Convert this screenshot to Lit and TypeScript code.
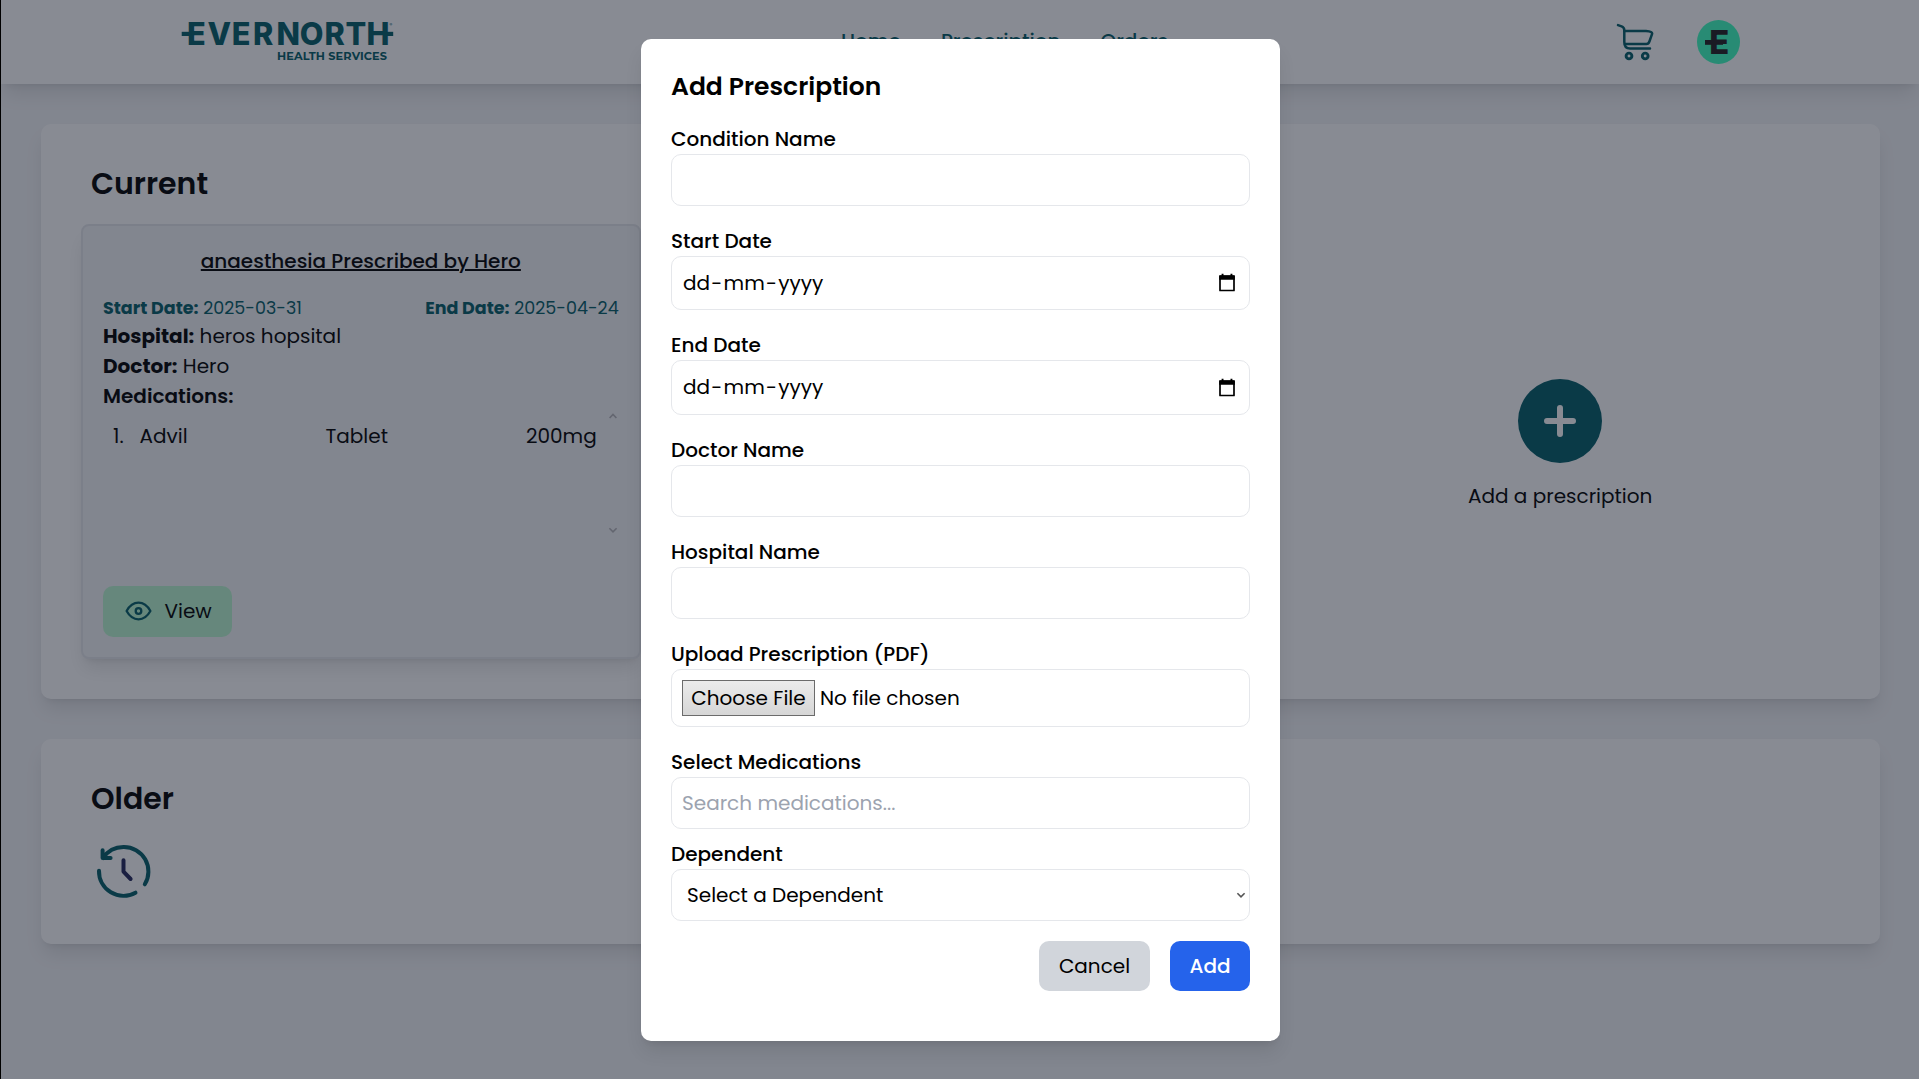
import { LitElement, html, css, svg, nothing } from "lit";
import { customElement } from "lit/decorators.js";

const calendarIcon = svg`
  <svg class="calendar" viewBox="0 0 18 19" width="18" height="19">
    <path d="M2 3.2h14v14.3H2z" fill="none" stroke="#000" stroke-width="1.7" stroke-linejoin="round" />
    <path d="M1.2 2.6h15.6v4.2H1.2zM3.6.8h1.9v3H3.6zM12.5.8h1.9v3h-1.9z" fill="#000" />
  </svg>`;

const chevron = (className: string, up = false) => html`
  <svg class=${className} viewBox="0 0 10 8" width="10" height="8">
    <path d=${up ? "M1.6 6 5 2.4 8.4 6" : "M1.4 2.2 5 5.8 8.6 2.2"} fill="none" stroke="currentColor" stroke-width="1.6" />
  </svg>`;

interface Field {
  label: string;
  kind: "text" | "date" | "file" | "search" | "select";
}

const FIELDS: Field[] = [
  { label: "Condition Name", kind: "text" },
  { label: "Start Date", kind: "date" },
  { label: "End Date", kind: "date" },
  { label: "Doctor Name", kind: "text" },
  { label: "Hospital Name", kind: "text" },
  { label: "Upload Prescription (PDF)", kind: "file" },
  { label: "Select Medications", kind: "search" },
  { label: "Dependent", kind: "select" },
];

@customElement("prescription-dialog")
class PrescriptionDialog extends LitElement {
  static styles = css`
    :host {
      display: block;
      box-sizing: border-box;
      width: 639px;
      padding: 30px 30px 50px;
      border-radius: 10px;
      background: #fff;
      color: #000;
      box-shadow: 0 12.5px 18.75px -3.75px rgb(0 0 0 / 0.1), 0 5px 7.5px -5px rgb(0 0 0 / 0.1);
    }
    * {
      box-sizing: border-box;
    }
    h2 {
      margin: 0 0 20px;
      font-size: 25px;
      line-height: 35px;
      font-weight: 600;
    }
    .field {
      margin-bottom: 20px;
    }
    .field.search {
      margin-bottom: 10px;
    }
    .label {
      display: block;
      height: 30px;
      font-weight: 500;
    }
    .control {
      display: flex;
      align-items: center;
      height: 52px;
      padding: 0 10px;
      border: 1px solid #e5e7eb;
      border-radius: 10px;
      white-space: nowrap;
    }
    .date .control {
      height: 54.5px;
      padding: 0 13px 1px 11px;
      justify-content: space-between;
    }
    .mask {
      display: flex;
      gap: 1.25px;
    }
    .file .control {
      height: 58.25px;
      gap: 5px;
    }
    .choose {
      height: 36px;
      width: 133px;
      padding: 2px 0;
      text-align: center;
      border: 1px solid #6b6b6b;
      background: linear-gradient(#ebebeb, #d6d6d6);
    }
    .placeholder {
      color: #9ca3af;
    }
    .select .control {
      padding: 0 3px 0 15px;
      justify-content: space-between;
    }
    .arrow {
      color: #555;
    }
    .actions {
      display: flex;
      justify-content: flex-end;
      gap: 20px;
    }
    .button {
      width: 111px;
      height: 50px;
      padding: 10px 0;
      border-radius: 10px;
      text-align: center;
      background: #d1d5db;
    }
    .button.primary {
      width: 80px;
      background: #2563eb;
      color: #fff;
      font-weight: 500;
    }
  `;

  private control(kind: Field["kind"]) {
    switch (kind) {
      case "date":
        return html`<div class="mask"><span>dd</span><span>-</span><span>mm</span><span>-</span><span>yyyy</span></div>
          ${calendarIcon}`;
      case "file":
        return html`<div class="choose">Choose File</div>
          <span>No file chosen</span>`;
      case "search":
        return html`<span class="placeholder">Search medications...</span>`;
      case "select":
        return html`<span>Select a Dependent</span>${chevron("arrow")}`;
      default:
        return nothing;
    }
  }

  render() {
    return html`
      <h2>Add Prescription</h2>
      ${FIELDS.map(
        (f) => html`
          <div class="field ${f.kind}">
            <span class="label">${f.label}</span>
            <div class="control">${this.control(f.kind)}</div>
          </div>
        `
      )}
      <div class="actions">
        <div class="button">Cancel</div>
        <div class="button primary">Add</div>
      </div>
    `;
  }
}

@customElement("app-root")
class AppRoot extends LitElement {
  static styles = css`
    :host {
      display: block;
      position: relative;
      box-sizing: border-box;
      width: 1919px;
      height: 1079px;
      overflow: hidden;
      border-left: 1px solid #000;
      background: #f3f4f6;
      color: #000;
      font: 400 20px/30px Poppins, Inter, "Noto Sans", sans-serif;
    }
    * {
      box-sizing: border-box;
    }
    svg {
      display: block;
    }
    header {
      display: flex;
      align-items: center;
      justify-content: space-between;
      height: 84px;
      padding: 0 179px 0 180px;
      background: #fff;
      color: #035c67;
      box-shadow: 0 12.5px 18.75px -3.75px rgb(0 0 0 / 0.1), 0 5px 7.5px -5px rgb(0 0 0 / 0.1);
    }
    .logo {
      overflow: visible;
    }
    .mark {
      font: 800 30.7px Inter, sans-serif;
    }
    .tagline {
      font: 700 11.3px Montserrat, Inter, sans-serif;
    }
    .registered {
      font: 400 4px Inter, sans-serif;
    }
    .initial {
      font: 800 33px Inter, sans-serif;
    }
    nav {
      display: flex;
      gap: 40px;
      margin-right: 1px;
      padding-bottom: 2px;
      font-weight: 500;
    }
    .tools {
      display: flex;
      align-items: center;
      gap: 43px;
    }
    main {
      display: flex;
      flex-direction: column;
      gap: 40px;
      padding: 40px 39px 0 40px;
    }
    .panel {
      padding: 40px;
      border-radius: 10px;
      background: #fff;
      box-shadow: 0 12.5px 18.75px -3.75px rgb(0 0 0 / 0.1), 0 5px 7.5px -5px rgb(0 0 0 / 0.1);
    }
    .panel.current {
      height: 575px;
    }
    .panel.older {
      height: 205px;
    }
    h1 {
      margin: 0 0 20px;
      padding-left: 10px;
      font-size: 30px;
      line-height: 40px;
      font-weight: 600;
    }
    .history {
      margin-left: 10px;
    }
    .columns {
      display: grid;
      grid-template-columns: repeat(3, 1fr);
      gap: 40px;
      height: 434.5px;
    }
    .record {
      display: flex;
      flex-direction: column;
      padding: 20px 20px 19.5px;
      border: 2px solid #e5e7eb;
      border-radius: 8px;
      background: #f3f4f6;
      box-shadow: 0 12.5px 18.75px -3.75px rgb(0 0 0 / 0.1), 0 5px 7.5px -5px rgb(0 0 0 / 0.1);
    }
    .title {
      height: 30px;
      margin-bottom: 20px;
      text-align: center;
      font-weight: 500;
      text-decoration: underline;
    }
    .dates {
      display: flex;
      justify-content: space-between;
      font-size: 17.5px;
      line-height: 25px;
      color: #035c67;
    }
    .strong {
      font-weight: 700;
    }
    .strong.heading {
      font-weight: 600;
    }
    .medications {
      display: flex;
      height: 125px;
      padding: 0 1px 0 10px;
    }
    .rows {
      flex: 1;
      padding-top: 10px;
    }
    .row {
      display: grid;
      grid-template-columns: 26.5px 186px 1fr auto;
    }
    .scroll {
      display: flex;
      flex-direction: column;
      justify-content: space-between;
      padding: 1px 0 2px 11px;
      color: #b4b4b8;
    }
    .view {
      display: flex;
      align-items: center;
      gap: 12.5px;
      width: 129px;
      height: 51px;
      margin-top: auto;
      padding: 0 0 1px 22px;
      border-radius: 10px;
      background: #bbf7d0;
    }
    .add {
      grid-column: 3;
      display: flex;
      flex-direction: column;
      align-items: center;
      gap: 18px;
      padding-top: 155px;
    }
    .backdrop {
      position: absolute;
      inset: 0;
      display: flex;
      align-items: center;
      justify-content: center;
      padding: 1px 0 0 1px;
      background: rgb(17 24 39 / 0.5);
    }
  `;

  private logo() {
    return html`
      <svg class="logo" viewBox="181 18 213 48" width="213" height="48" fill="#035c67">
        <text class="mark" y="45" x="187 207.6 231.7 252.9 276.4 299.7 324.5 345.6 366.6">EVERNORTH</text>
        <rect x="181.7" y="31.8" width="8" height="4.2" />
        <rect x="386" y="31.8" width="7.2" height="4.2" />
        <text class="registered" x="389.5" y="26">®</text>
        <text class="tagline" x="277" y="60" textLength="110">HEALTH SERVICES</text>
      </svg>
    `;
  }

  render() {
    return html`
      <header>
        ${this.logo()}
        <nav><span>Home</span><span>Prescription</span><span>Orders</span></nav>
        <div class="tools">
          <svg viewBox="0 0 38 38" width="38" height="38" fill="none" stroke="#035c67" stroke-width="2.5" stroke-linecap="round" stroke-linejoin="round">
            <path d="M2 2.1 5.6 3.4Q8.3 4.4 8.3 7.2V19Q8.3 25.6 14 25.6H34" />
            <path d="M8.3 8H30Q37 8.4 36 11.2L33.6 18Q32.6 21 30.4 21H9" />
            <circle cx="13" cy="33" r="2.9" stroke-width="2.9" />
            <circle cx="29.2" cy="33" r="2.9" stroke-width="2.9" />
          </svg>
          <svg viewBox="0 0 43 44" width="43" height="44">
            <ellipse cx="21.5" cy="22" rx="21.5" ry="22" fill="#3effc0" />
            <g fill="#231f20">
              <text class="initial" x="12.3" y="34" textLength="20" lengthAdjust="spacingAndGlyphs">E</text>
              <rect x="8" y="20" width="18" height="4.8" />
            </g>
          </svg>
        </div>
      </header>
      <main>
        <section class="panel current">
          <h1>Current</h1>
          <div class="columns">
            <article class="record">
              <div class="title">anaesthesia Prescribed by Hero</div>
              <div class="dates">
                <div><span class="strong">Start Date:</span> 2025-03-31</div>
                <div><span class="strong">End Date:</span> 2025-04-24</div>
              </div>
              <div><span class="strong">Hospital:</span> heros hopsital</div>
              <div><span class="strong">Doctor:</span> Hero</div>
              <div class="strong heading">Medications:</div>
              <div class="medications">
                <div class="rows">
                  <div class="row"><span>1.</span><span>Advil</span><span>Tablet</span><span>200mg</span></div>
                </div>
                <div class="scroll">${chevron("up", true)}${chevron("down")}</div>
              </div>
              <div class="view">
                <svg viewBox="0 0 27 20" width="27" height="20" fill="none" stroke="#035c67" stroke-width="2.3">
                  <path d="M1.6 10C4.6 4.6 8.6 1.7 13.5 1.7S22.4 4.6 25.4 10C22.4 15.4 18.4 18.3 13.5 18.3S4.6 15.4 1.6 10Z" stroke-linejoin="round" />
                  <circle cx="13.5" cy="10" r="2.8" />
                </svg>
                <span>View</span>
              </div>
            </article>
            <div class="add">
              <svg viewBox="0 0 84 84" width="84" height="84">
                <circle cx="42" cy="42" r="42" fill="#035c67" />
                <path d="M42 29v26M29 42h26" stroke="#fff" stroke-width="6" stroke-linecap="round" />
              </svg>
              <span>Add a prescription</span>
            </div>
          </div>
        </section>
        <section class="panel older">
          <h1>Older</h1>
          <svg class="history" viewBox="0 20 65 65" width="65" height="65" fill="none" stroke-width="4" stroke-linecap="round" stroke-linejoin="round">
            <path d="M12 39.1A24.5 24.5 0 0 1 32.5 28A24.5 24.5 0 0 1 53.8 65.3M8 51.7A24.5 24.5 0 0 0 44.5 73.7M11.6 31.2V39h8" stroke="#035c67" />
            <path d="M32.5 41.2V52.6L39.6 60" stroke="#23265a" />
          </svg>
        </section>
      </main>
      <div class="backdrop"><prescription-dialog></prescription-dialog></div>
    `;
  }
}
